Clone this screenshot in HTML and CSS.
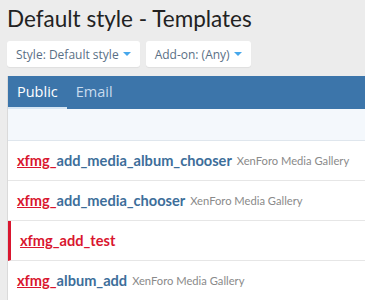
FILE: index.html
```html
<!DOCTYPE html>
<html lang="en">
<head>
  <meta charset="UTF-8">
  <title>Default style - Templates</title>
  <link rel="stylesheet" href="styles.css">
</head>
<body>

  <h1 class='page-title'>Default style - Templates</h1>

  <div class='filters'>
    <button class='menu-btn'>Style: Default style <span class='caret'></span></button>
    <button class='menu-btn'>Add-on: (Any) <span class='caret'></span></button>
  </div>

  <div class='block'>
    <div class='tabs'>
      <a class='tab active'>Public</a>
      <a class='tab'>Email</a>
    </div>
    <div class='filter-bar'></div>

    <ul class='data-list'>
      <li class='row'>
        <a class='tpl'><span class='hl'><u>xfmg</u>_</span>add_media_album_chooser</a>
        <span class='addon'>XenForo Media Gallery</span>
      </li>
      <li class='row'>
        <a class='tpl'><span class='hl'><u>xfmg</u>_</span>add_media_chooser</a>
        <span class='addon'>XenForo Media Gallery</span>
      </li>
      <li class='row custom'>
        <a class='tpl'><span class='hl'><u>xfmg</u>_</span>add_test</a>
      </li>
      <li class='row'>
        <a class='tpl'><span class='hl'><u>xfmg</u>_</span>album_add</a>
        <span class='addon'>XenForo Media Gallery</span>
      </li>
    </ul>
  </div>

</body>
</html>
```

FILE: styles.css
```css
body {
  margin:0;
  padding:0 0 0 7px;
  background:#ececec;
  font-family:"Open Sans", sans-serif;
  color:#141414;
  overflow:hidden;
}

.page-title {
  margin:0;
  padding-top:4px;
  font-family:Lato, sans-serif;
  font-size:22.5px;
  font-weight:400;
  line-height:29px;
  color:#222;
}

.filters {
  display:flex;
  gap:6px;
  margin-top:8px;
}

.menu-btn {
  font-family:inherit;
  font-size:12px;
  color:#5a6f85;
  background:#fff;
  border:0;
  border-radius:3px;
  height:26px;
  padding:0 9px;
  display:flex;
  align-items:center;
  gap:4px;
  box-shadow:0 1px 1px rgba(0,0,0,.06);
}

.caret {
  width:0;
  height:0;
  border-left:4px solid transparent;
  border-right:4px solid transparent;
  border-top:4px solid #47a7eb;
}

.block {
  margin-top:9px;
  background:#fff;
  border-left:1px solid #dadada;
}

.tabs {
  display:flex;
  background:#3c75aa;
  height:33px;
}

.tab {
  font-size:14.5px;
  color:#c9dcee;
  padding:0 9px;
  line-height:31px;
  border-bottom:2px solid transparent;
}

.tab.active {
  color:#fff;
  border-bottom-color:#d6e6f4;
}

.filter-bar {
  height:31px;
  background:#f4f8fc;
  border-bottom:1px solid #dfe6ed;
}

.data-list {
  list-style:none;
  margin:0;
  padding:0;
}

.row {
  height:39px;
  display:flex;
  align-items:center;
  gap:5px;
  padding-left:9px;
  border-bottom:1px solid #e6e6e6;
  white-space:nowrap;
}

.row.custom {
  border-left:3px solid #d9162f;
  padding-left:9px;
}

.tpl {
  font-family:Lato, sans-serif;
  font-size:14.6px;
  font-weight:700;
  color:#3d6e9a;
}

.hl {
  color:#d9162f;
}

.row.custom .tpl {
  color:#d9162f;
}

.addon {
  font-family:Lato, sans-serif;
  font-size:11.2px;
  color:#8a8a8a;
}
```
